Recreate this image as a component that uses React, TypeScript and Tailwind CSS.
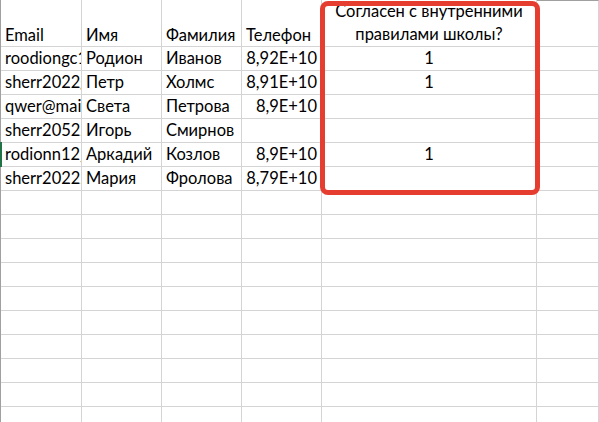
import React from "react";

const rows: [string, string, string, string, string][] = [
  ["roodiongc1@mail.ru", "Родион", "Иванов", "8,92E+10", "1"],
  ["sherr2022g@gmail.com", "Петр", "Холмс", "8,91E+10", "1"],
  ["qwer@mail.ru", "Света", "Петрова", "8,9E+10", ""],
  ["sherr20522@mail.ru", "Игорь", "Смирнов", "", ""],
  ["rodionn12_@gmail.com", "Аркадий", "Козлов", "8,9E+10", "1"],
  ["sherr20222@mail.ru", "Мария", "Фролова", "8,79E+10", ""],
];

const emptyRows = Array.from({ length: 12 });

const cell = "border-r border-b border-[#d4d4d4] overflow-hidden whitespace-nowrap";

export default function App() {
  return (
    <div
      className="relative w-[599px] h-[422px] overflow-hidden bg-white text-black text-[16.5px]"
      style={{ fontFamily: "Lato, 'Noto Sans', sans-serif" }}
    >
      <div className="grid grid-cols-[81px_80px_80px_80px_215px_1fr] border-l border-[#a0a0a0]">
        {/* header */}
        <div className={`${cell} h-[47px] flex items-end pl-[4px] pb-[1px] leading-[20px]`}>Email</div>
        <div className={`${cell} h-[47px] flex items-end pl-[4px] pb-[1px] leading-[20px]`}>Имя</div>
        <div className={`${cell} h-[47px] flex items-end pl-[4px] pb-[1px] leading-[20px]`}>Фамилия</div>
        <div className={`${cell} h-[47px] flex items-end pl-[4px] pb-[1px] leading-[20px] overflow-visible`}>Телефон</div>
        <div className={`${cell} h-[47px] flex flex-col justify-end items-center pb-[1px] leading-[22.5px]`}>
          <span>Согласен с внутренними</span>
          <span>правилами школы?</span>
        </div>
        <div className={`${cell} h-[47px] border-t border-t-[#a0a0a0]`} />

        {rows.map((r, i) => (
          <React.Fragment key={i}>
            <div className={`${cell} h-[24px] flex items-end pl-[4px] pb-[2px] leading-[20px]`}>{r[0]}</div>
            <div className={`${cell} h-[24px] flex items-end pl-[4px] pb-[2px] leading-[20px]`}>{r[1]}</div>
            <div className={`${cell} h-[24px] flex items-end pl-[4px] pb-[2px] leading-[20px]`}>{r[2]}</div>
            <div className={`${cell} h-[24px] flex items-end justify-end pr-[4px] pb-[2px] leading-[20px]`}>{r[3]}</div>
            <div className={`${cell} h-[24px] flex items-end justify-center pb-[2px] leading-[20px]`}>{r[4]}</div>
            <div className={`${cell} h-[24px]`} />
          </React.Fragment>
        ))}

        {emptyRows.map((_, i) => (
          <React.Fragment key={`e${i}`}>
            <div className={`${cell} h-[24px]`} />
            <div className={`${cell} h-[24px]`} />
            <div className={`${cell} h-[24px]`} />
            <div className={`${cell} h-[24px]`} />
            <div className={`${cell} h-[24px]`} />
            <div className={`${cell} h-[24px]`} />
          </React.Fragment>
        ))}
      </div>

      {/* selected row marker */}
      <div className="absolute left-0 top-[142px] w-[2px] h-[25px] bg-[#217346]" />

      {/* red highlight */}
      <div className="absolute left-[320px] top-[1px] w-[220px] h-[194px] border-[5px] border-[#e53d30] rounded-[8px]" />
    </div>
  );
}
